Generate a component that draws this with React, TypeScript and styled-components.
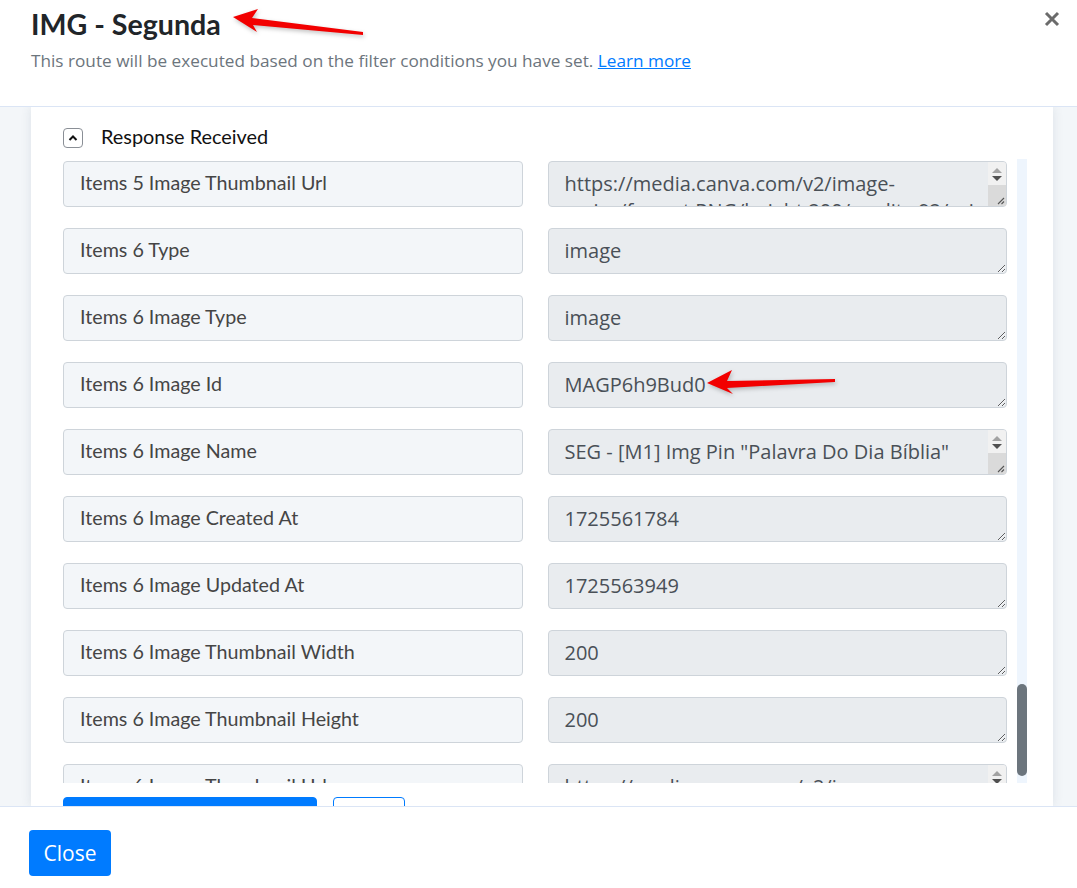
import { useLayoutEffect, useRef, useState } from 'react'
import styled, { createGlobalStyle } from 'styled-components'

const GlobalStyle = createGlobalStyle`
  html, body, #root {
    margin: 0;
    height: 100%;
  }
  body {
    background: #fff;
    font-family: Lato, 'Noto Sans', sans-serif;
    color: #212529;
    overflow: hidden;
  }
  * {
    box-sizing: border-box;
  }
`

const Modal = styled('div')`
  position: relative;
  display: flex;
  flex-direction: column;
  height: 888px;
  background: #fff;
`

const Header = styled('div')`
  position: relative;
  flex: 0 0 107px;
  padding: 7px 31px 0;
  border-bottom: 1px solid #dbe5f5;
`

const Title = styled('h2')`
  margin: 0;
  font-size: 28.6px;
  line-height: 34px;
  font-weight: 700;
  color: #212529;
`

const Subtitle = styled('p')`
  margin: 9px 0 0;
  font-family: 'Open Sans', 'Noto Sans', sans-serif;
  font-size: 17.2px;
  line-height: 22px;
  color: #6c757d;

  a {
    color: #007bff;
    text-decoration: underline;
  }
`

const CloseX = styled('button')`
  position: absolute;
  top: 10px;
  right: 16px;
  width: 18px;
  height: 18px;
  padding: 0;
  border: 0;
  background: none;
  cursor: pointer;
`

const Body = styled('div')`
  flex: 0 0 699px;
  overflow: hidden;
  background: #f3f6f9;
  padding: 0 24px 0 31px;
`

const Card = styled('div')`
  height: 100%;
  background: #fff;
  padding: 21px 26px 0 32px;
  box-shadow: 0 0 10px rgba(60, 80, 110, 0.12);
`

const Toggle = styled('div')`
  display: flex;
  align-items: center;
  gap: 18px;
  height: 20px;
  margin-bottom: 11px;
  font-size: 19.9px;
  color: #111;
`

const ToggleText = styled('span')`
  padding-bottom: 5px;
`

const ChevronBox = styled('span')`
  display: inline-flex;
  align-items: center;
  justify-content: center;
  width: 20px;
  height: 20px;
  border: 1px solid #8a8f96;
  border-radius: 4px;
`

const ListWrap = styled('div')`
  display: flex;
  height: 624px;
`

const Scroller = styled('div')`
  flex: 1;
  overflow-y: scroll;
  scrollbar-width: none;
  padding: 2px 10px 20px 0;
  display: flex;
  flex-direction: column;
  gap: 21px;

  &::-webkit-scrollbar {
    display: none;
  }
`

const Track = styled('div')`
  position: relative;
  flex: 0 0 10px;
  background: #eef5fd;
`

const Thumb = styled('div')`
  position: absolute;
  left: 0;
  right: 0;
  background: #6c757d;
  border-radius: 5px;
`

const Row = styled('div')`
  display: grid;
  grid-template-columns: 1fr 1fr;
  gap: 25px;
  flex: 0 0 46px;
`

const Label = styled('div')`
  height: 46px;
  display: flex;
  align-items: center;
  padding: 0 16px 4px;
  background: #f3f6f9;
  border: 1px solid #ced4da;
  border-radius: 4px;
  font-size: 19.7px;
  color: #454545;
  white-space: nowrap;
  overflow: hidden;
`

const ValueBox = styled('div')`
  position: relative;
  height: 46px;
`

const Value = styled('textarea')<{ $scrolls: boolean }>`
  display: block;
  width: 100%;
  height: 46px;
  margin: 0;
  padding: 8px ${(p) => (p.$scrolls ? 20 : 16)}px 8px 16px;
  background: #e9ecef;
  border: 1px solid #ced4da;
  border-radius: 4px;
  font-family: 'Open Sans', 'Noto Sans', sans-serif;
  font-size: 20px;
  line-height: 27px;
  color: #495057;
  resize: vertical;
  outline: none;
  overflow: hidden;
`

// little native-looking scrollbar drawn over textareas whose text runs past two lines
const ScrollStrip = styled('div')`
  position: absolute;
  top: 1px;
  right: 1px;
  bottom: 1px;
  width: 18px;
  display: flex;
  flex-direction: column;
  align-items: center;
  background: #f1f1f1;
  border-radius: 0 3px 3px 0;
  pointer-events: none;
`

const StripArrow = styled('span')<{ $down?: boolean; $color: string }>`
  width: 0;
  height: 0;
  margin-top: ${(p) => (p.$down ? 3 : 6)}px;
  border-left: 5px solid transparent;
  border-right: 5px solid transparent;
  ${(p) => (p.$down ? `border-top: 5px solid ${p.$color};` : `border-bottom: 5px solid ${p.$color};`)}
`

const StripThumb = styled('div')`
  position: relative;
  flex: 1;
  width: 100%;
  margin-top: 4px;
  background: #dadada;
`

const Grip = styled('svg')`
  position: absolute;
  right: 1px;
  bottom: 1px;
`

const Actions = styled('div')`
  display: flex;
  gap: 16px;
  margin-top: 14px;
`

const PrimaryButton = styled('button')<{ $width: number }>`
  width: ${(p) => p.$width}px;
  height: 40px;
  border: 1px solid #007bff;
  border-radius: 4px;
  background: #007bff;
  color: #fff;
  font-size: 16px;
`

const OutlineButton = styled('button')<{ $width: number }>`
  width: ${(p) => p.$width}px;
  height: 40px;
  border: 1px solid #007bff;
  border-radius: 4px;
  background: #fff;
  color: #007bff;
  font-size: 16px;
`

const Footer = styled('div')`
  flex: 1;
  border-top: 1px solid #dbe5f5;
  padding: 23px 29px;
`

const CloseButton = styled('button')`
  width: 82px;
  height: 46px;
  border: 0;
  border-radius: 4px;
  background: #007bff;
  color: #fff;
  font-family: 'Open Sans', 'Noto Sans', sans-serif;
  font-size: 21px;
  cursor: pointer;
`

const Annotations = styled('svg')`
  position: absolute;
  inset: 0;
  pointer-events: none;
  filter: drop-shadow(1px 2px 2px rgba(0, 0, 0, 0.25));
`

const fields = [
  'Type',
  'Image Type',
  'Image Id',
  'Image Name',
  'Image Created At',
  'Image Updated At',
  'Image Thumbnail Width',
  'Image Thumbnail Height',
  'Image Thumbnail Url',
]

const ids = ['MAGP2fk1Lq8', 'MAGP3sd8Xw2', 'MAGP4nb7Yt5', 'MAGP5jc3Rr9', 'MAGP5xq0Hm4', 'MAGP6h9Bud0']

const thumbUrl = (n: number) =>
  `https://media.canva.com/v2/image-resize/format:PNG/height:200/quality:92/uri:s3%3A%2F%2Fmedia-private.canva.com%2F${ids[n - 1]}%2F1%2Fthumbnail.png/watermark:F/width:200`

const valueFor = (n: number, field: string) => {
  switch (field) {
    case 'Type':
    case 'Image Type':
      return 'image'
    case 'Image Id':
      return ids[n - 1]
    case 'Image Name':
      return n === 6
        ? 'SEG - [M1] Img Pin "Palavra Do Dia Bíblia" para uso'
        : `SEG - [M${n}] Img Pin "Versículo Do Dia" para uso`
    case 'Image Created At':
      return n === 6 ? '1725561784' : String(1725561784 - n * 3611)
    case 'Image Updated At':
      return n === 6 ? '1725563949' : String(1725563949 - n * 2987)
    case 'Image Thumbnail Width':
    case 'Image Thumbnail Height':
      return '200'
    default:
      return thumbUrl(n)
  }
}

const head = [
  { label: 'Status', value: 'success' },
  { label: 'Status Code', value: '200' },
  { label: 'Headers Content Type', value: 'application/json' },
  { label: 'Headers Date', value: 'Thu, 05 Sep 2024 19:12:29 GMT' },
  { label: 'Headers Server', value: 'cloudflare' },
  { label: 'Headers Content Length', value: '4821' },
  { label: 'Headers Connection', value: 'keep-alive' },
  { label: 'Headers Cache Control', value: 'no-store' },
  { label: 'Continuation', value: 'eyJpZCI6Ik1BR1A2aDlCdWQwIn0' },
]

const rows = [
  ...head,
  ...[1, 2, 3, 4, 5, 6].flatMap((n) =>
    fields.map((f) => ({ label: `Items ${n} ${f}`, value: valueFor(n, f) })),
  ),
]

const scrolls = (label: string) => /Thumbnail Url|Image Name|Headers Date/.test(label)

// first row shown when the panel opens: "Items 5 Image Thumbnail Url"
const FIRST_VISIBLE = head.length + 4 * fields.length + 8
const ROW_PITCH = 67

const Arrow = ({ points }: { points: string }) => <polygon points={points} fill="#f20000" />

const App = () => {
  const listRef = useRef<HTMLDivElement>(null)
  const [thumb, setThumb] = useState({ top: 0, height: 0 })

  useLayoutEffect(() => {
    const el = listRef.current
    if (!el) return
    el.scrollTop = FIRST_VISIBLE * ROW_PITCH
    const view = el.clientHeight
    const height = Math.max(30, (view * view) / el.scrollHeight)
    const top = (el.scrollTop / (el.scrollHeight - view)) * (view - height)
    setThumb({ top, height })
  }, [])

  return (
    <Modal>
      <GlobalStyle />
      <Header>
        <Title>IMG - Segunda</Title>
        <Subtitle>
          This route will be executed based on the filter conditions you have set. <a href="#">Learn more</a>
        </Subtitle>
        <CloseX aria-label="Close">
          <svg width="18" height="18" viewBox="0 0 18 18">
            <path d="M3 3 L15 15 M15 3 L3 15" stroke="#6b6b6b" strokeWidth="3" strokeLinecap="butt" />
          </svg>
        </CloseX>
      </Header>

      <Body>
        <Card>
          <Toggle>
            <ChevronBox>
              <svg width="12" height="12" viewBox="0 0 12 12">
                <path d="M2.5 8 L6 4.5 L9.5 8" fill="none" stroke="#111" strokeWidth="2" />
              </svg>
            </ChevronBox>
            <ToggleText>Response Received</ToggleText>
          </Toggle>
          <ListWrap>
            <Scroller ref={listRef}>
              {rows.map((r) => (
                <Row key={r.label}>
                  <Label>{r.label}</Label>
                  <ValueBox>
                    <Value readOnly value={r.value} $scrolls={scrolls(r.label)} />
                    {scrolls(r.label) && (
                      <ScrollStrip>
                        <StripArrow $color="#a3a3a3" />
                        <StripArrow $down $color="#505050" />
                        <StripThumb>
                          <Grip width="9" height="9" viewBox="0 0 9 9">
                            <path d="M8 2 L2 8 M8 5.5 L5.5 8" stroke="#555" strokeWidth="1.1" />
                          </Grip>
                        </StripThumb>
                      </ScrollStrip>
                    )}
                  </ValueBox>
                </Row>
              ))}
            </Scroller>
            <Track>
              <Thumb style={{ top: thumb.top, height: thumb.height }} />
            </Track>
          </ListWrap>
          <Actions>
            <PrimaryButton $width={254}>Test & Save</PrimaryButton>
            <OutlineButton $width={72}>Save</OutlineButton>
          </Actions>
        </Card>
      </Body>

      <Footer>
        <CloseButton>Close</CloseButton>
      </Footer>

      <Annotations width="1077" height="888" viewBox="0 0 1077 888">
        <Arrow points="233,17 258,9 252,18 363,32 363,35 253,25 257,32" />
        <Arrow points="707,383 732,370 727,381 835,379 835,382 727,388 733,394" />
      </Annotations>
    </Modal>
  )
}

export default App
